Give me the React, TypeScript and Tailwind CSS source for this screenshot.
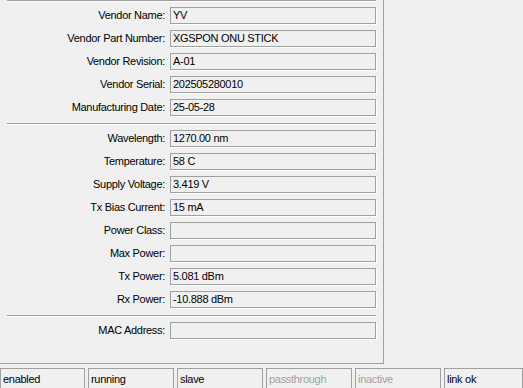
import React from "react"

const sfp = [
  { label: "Vendor Name:", value: "YV" },
  { label: "Vendor Part Number:", value: "XGSPON ONU STICK" },
  { label: "Vendor Revision:", value: "A-01" },
  { label: "Vendor Serial:", value: "202505280010" },
  { label: "Manufacturing Date:", value: "25-05-28" },
]

const monitor = [
  { label: "Wavelength:", value: "1270.00 nm" },
  { label: "Temperature:", value: "58 C" },
  { label: "Supply Voltage:", value: "3.419 V" },
  { label: "Tx Bias Current:", value: "15 mA" },
  { label: "Power Class:", value: "" },
  { label: "Max Power:", value: "" },
  { label: "Tx Power:", value: "5.081 dBm" },
  { label: "Rx Power:", value: "-10.888 dBm" },
]

const status = [
  { text: "enabled", muted: false },
  { text: "running", muted: false },
  { text: "slave", muted: false },
  { text: "passthrough", muted: true },
  { text: "inactive", muted: true },
  { text: "link ok", muted: false },
]

function Separator() {
  return <div className="h-[2px] border-t border-b border-t-[#a0a0a0] border-b-white" />
}

function Field({ label, value }: { label: string; value: string }) {
  return (
    <div className="flex items-center">
      <div className="w-[159px] pr-[1px] text-right leading-[17px] whitespace-nowrap">{label}</div>
      <div className="ml-[4px] h-[17px] w-[206px] border border-[#a0a0a0] shadow-[1px_1px_0_#ffffff] pl-[2px] leading-[15px] whitespace-nowrap overflow-hidden">
        {value}
      </div>
    </div>
  )
}

export default function App() {
  return (
    <div
      className="w-[523px] h-[388px] overflow-hidden bg-[#f0f0f0] text-[11px] tracking-[-0.3px] text-black flex flex-col"
      style={{ fontFamily: '"Liberation Sans", Arial, sans-serif' }}
    >
      <div className="w-[384px] h-[364px] shrink-0 border-r border-b border-[#a0a0a0] px-[7px]">
        <Separator />
        <div className="mt-[5px] flex flex-col gap-[6px]">
          {sfp.map((f) => (
            <Field key={f.label} label={f.label} value={f.value} />
          ))}
        </div>
        <div className="mt-[7px] mb-[5px]">
          <Separator />
        </div>
        <div className="flex flex-col gap-[6px]">
          {monitor.map((f) => (
            <Field key={f.label} label={f.label} value={f.value} />
          ))}
        </div>
        <div className="mt-[7px] mb-[5px]">
          <Separator />
        </div>
        <Field label="MAC Address:" value="" />
      </div>

      {/* status bar */}
      <div className="mt-[4px] flex gap-[3px] flex-1">
        {status.map((s, i) => (
          <div
            key={s.text}
            className={
              "border-t border-l border-r border-[#a0a0a0] pl-[2px] pt-[3px] leading-[15px] " +
              (i === 0 ? "w-[85px] " : i === 5 ? "flex-1 " : "w-[86px] ") +
              (s.muted ? "text-[#a0a0a0]" : "text-black")
            }
          >
            {s.text}
          </div>
        ))}
      </div>
    </div>
  )
}
